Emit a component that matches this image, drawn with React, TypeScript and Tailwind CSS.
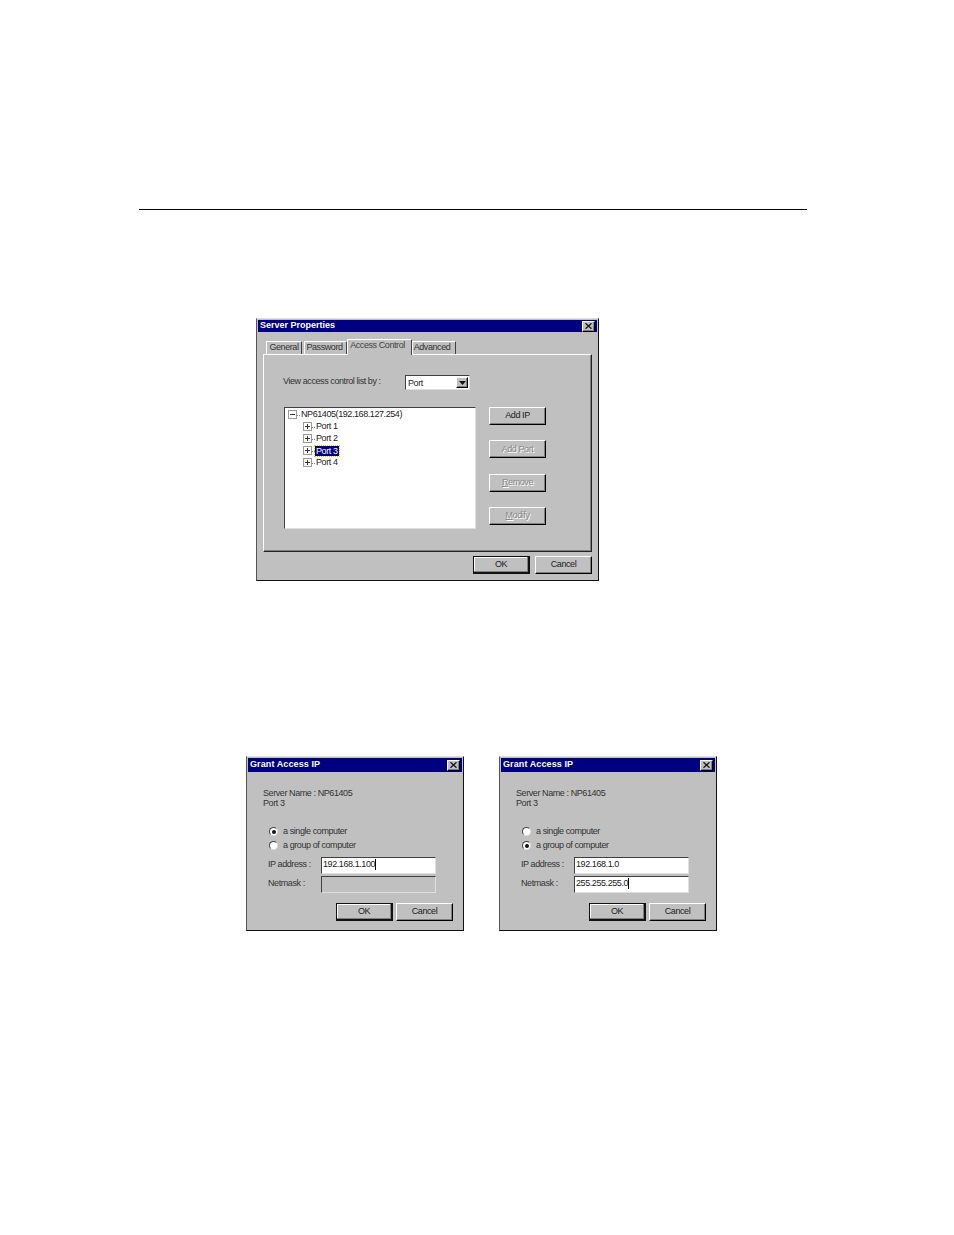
const font = "font-['Liberation_Sans',Arial,sans-serif]";
const raised = "bg-[#c0c0c0] border border-t-white border-l-white border-r-black border-b-black shadow-[inset_-1px_-1px_0_#808080]";
const sunken = "border border-t-[#404040] border-l-[#404040] border-r-[#dfdfdf] border-b-[#dfdfdf]";
const small = "text-[9px] tracking-[-0.42px]";

function CloseBox() {
  return (
    <div className={`w-[13px] h-[11px] ${raised} flex items-center justify-center`}>
      <svg width="7" height="6" viewBox="0 0 7 6" fill="none" stroke="#111" strokeWidth="1.3">
        <path d="M0.5 0.3 L6.5 5.7 M6.5 0.3 L0.5 5.7" />
      </svg>
    </div>
  );
}

function TitleBar({ title, bar, track }: { title: string; bar: string; track: string }) {
  return (
    <div className={`${bar} bg-[#000080] flex items-center justify-between pl-[2px] pr-[2px]`}>
      <span className={`text-white font-bold text-[9px] leading-none pb-[2px] ${track}`}>{title}</span>
      <CloseBox />
    </div>
  );
}

function Btn({ label, disabled, isDefault, underline }: { label: string; disabled?: boolean; isDefault?: boolean; underline?: string }) {
  const rest = underline ? label.slice(1) : label;
  return (
    <div
      className={`w-[57px] h-[18px] flex items-center justify-center ${small} ${
        isDefault
          ? "bg-[#c0c0c0] border border-[#111] border-r-2 border-b-2 shadow-[inset_-1px_-1px_0_#808080,inset_1px_1px_0_#fff]"
          : raised
      } ${disabled ? "text-[#8a8a8a] [text-shadow:1px_1px_0_#fff]" : "text-[#222]"}`}
    >
      {underline ? <span className="underline">{underline}</span> : null}
      {rest}
    </div>
  );
}

function Tab({ label, w, active, shift }: { label: string; w: string; active?: boolean; shift?: string }) {
  return (
    <div
      className={`${w} flex items-center justify-center ${small} ${shift ?? ""} border-t border-l border-white border-r border-r-[#404040] rounded-t-[1px] ${
        active ? "h-[16px] mb-[-1px] z-10 bg-[#c0c0c0] pb-[3px] text-[#444]" : "h-[13px] text-[#333]"
      }`}
    >
      {label}
    </div>
  );
}

function PlusBox({ minus }: { minus?: boolean }) {
  return (
    <svg width="9" height="9" viewBox="0 0 9 9" className="shrink-0 -mt-px">
      <rect x="0.5" y="0.5" width="8" height="8" fill="#fff" stroke="#9a9a9a" />
      <path d={minus ? "M2 4.5 H7" : "M2 4.5 H7 M4.5 2 V7"} stroke="#333" strokeWidth="1" />
    </svg>
  );
}

function TreePort({ label, selected }: { label: string; selected?: boolean }) {
  return (
    <div className={`h-[12px] flex items-center pl-[18px] ${small} text-[#222]`}>
      <PlusBox />
      <span className="w-[3px] border-t border-dotted border-[#808080]" />
      <span
        className={selected ? "px-[1px] bg-[#000080] text-white outline-dotted outline-[1px] outline-[#e8d000] leading-[10px]" : "ml-px"}
      >
        {label}
      </span>
    </div>
  );
}

function ServerDialog() {
  return (
    <div className="w-[343px] h-[263px] bg-[#c0c0c0] border border-[#dfdfdf] border-r-[#111] border-b-[#111] border-l-[#555] p-px flex flex-col">
      <TitleBar title="Server Properties" bar="h-[12px]" track="tracking-[0px]" />
      <div className="flex items-end h-[22px] pl-[8px]">
        <Tab label="General" w="w-[36px]" />
        <Tab label="Password" w="w-[43px] ml-[2px]" shift="pr-[2px]" />
        <Tab label="Access Control" w="w-[65px]" active shift="pr-[4px]" />
        <Tab label="Advanced" w="w-[44px]" shift="pr-[4px]" />
      </div>
      <div className="ml-[5px] w-[329px] h-[198px] border border-t-white border-l-white border-r-[#222] border-b-[#222] shadow-[inset_-1px_-1px_0_#808080] pt-[20px]">
        <div className={`flex items-center h-[15px] pl-[19px] ${small} text-[#333]`}>
          <span className="w-[122px] pb-[2px]">View access control list by :</span>
          <div className={`w-[65px] h-[15px] bg-white ${sunken} flex items-center justify-between pl-[2px] pr-px`}>
            <span className="text-[#222] pt-[2px]">Port</span>
            <div className={`w-[12px] h-[11px] ${raised} flex items-center justify-center`}>
              <svg width="7" height="4" viewBox="0 0 7 4"><path d="M0 0 H7 L3.5 4 Z" fill="#111" /></svg>
            </div>
          </div>
        </div>
        <div className="flex mt-[17px] pl-[20px]">
          <div className={`w-[192px] h-[122px] bg-white ${sunken} pt-[1px]`}>
            <div className={`h-[12px] flex items-center pl-[3px] ${small} text-[#222]`}>
              <PlusBox minus />
              <span className="w-[3px] border-t border-dotted border-[#808080]" />
              <span className="ml-px">NP61405(192.168.127.254)</span>
            </div>
            <TreePort label="Port 1" />
            <TreePort label="Port 2" />
            <TreePort label="Port 3" selected />
            <TreePort label="Port 4" />
          </div>
          <div className="ml-[13px] flex flex-col gap-[15.4px]">
            <Btn label="Add IP" />
            <Btn label="Add Port" disabled />
            <Btn label="Remove" disabled underline="R" />
            <Btn label="Modify" disabled underline="M" />
          </div>
        </div>
      </div>
      <div className="flex justify-end gap-[5px] pr-[5px] mt-[4px]">
        <Btn label="OK" isDefault />
        <Btn label="Cancel" />
      </div>
    </div>
  );
}

function Radio({ checked, label }: { checked?: boolean; label: string }) {
  return (
    <div className={`flex items-center h-[14px] ${small} text-[#333]`}>
      <div className="w-[9px] h-[9px] -mt-px rounded-full bg-white border border-t-[#444] border-l-[#444] border-r-[#ddd] border-b-[#ddd] flex items-center justify-center shrink-0">
        {checked ? <div className="w-[4px] h-[4px] rounded-full bg-[#111]" /> : null}
      </div>
      <span className="ml-[5px]">{label}</span>
    </div>
  );
}

function Field({ label, value, disabled, caret }: { label: string; value?: string; disabled?: boolean; caret?: boolean }) {
  return (
    <div className="flex items-start h-[19px]">
      <span className={`w-[53px] ${small} text-[#333] leading-[14px]`}>{label}</span>
      <div className={`w-[115px] h-[17px] ${disabled ? "bg-[#c0c0c0]" : "bg-white"} ${sunken} flex items-center pl-[1px] pb-[2px] ${small} text-[#222]`}>
        {value}
        {caret ? <span className="inline-block w-px h-[11px] bg-black" /> : null}
      </div>
    </div>
  );
}

function GrantDialog({ group }: { group?: boolean }) {
  return (
    <div className="w-[218px] h-[175px] bg-[#c0c0c0] border border-[#dfdfdf] border-r-[#111] border-b-[#111] border-l-[#555] p-px flex flex-col">
      <TitleBar title="Grant Access IP" bar="h-[14px]" track="tracking-[0.1px]" />
      <div className={`pl-[15px] pt-[16px] ${small} leading-[10px] text-[#333]`}>
        <div>Server Name : NP61405</div>
        <div>Port 3</div>
      </div>
      <div className="pl-[21px] pt-[17px]">
        <Radio checked={!group} label="a single computer" />
        <Radio checked={group} label="a group of computer" />
      </div>
      <div className="pl-[20px] pt-[4px]">
        {group ? (
          <>
            <Field label="IP address :" value="192.168.1.0" />
            <Field label="Netmask :" value="255.255.255.0" caret />
          </>
        ) : (
          <>
            <Field label="IP address :" value="192.168.1.100" caret />
            <Field label="Netmask :" disabled />
          </>
        )}
      </div>
      <div className="flex justify-end gap-[3px] pr-[9px] pt-[8px]">
        <Btn label="OK" isDefault />
        <Btn label="Cancel" />
      </div>
    </div>
  );
}

export default function App() {
  return (
    <div className={`w-[954px] h-[1235px] bg-white overflow-hidden ${font}`}>
      <div className="ml-[139px] mt-[209px] w-[668px] h-px bg-black" />
      <div className="h-[108px]" />
      <div className="ml-[256px]">
        <ServerDialog />
      </div>
      <div className="ml-[246px] mt-[175px] flex gap-[35px]">
        <GrantDialog />
        <GrantDialog group />
      </div>
    </div>
  );
}
